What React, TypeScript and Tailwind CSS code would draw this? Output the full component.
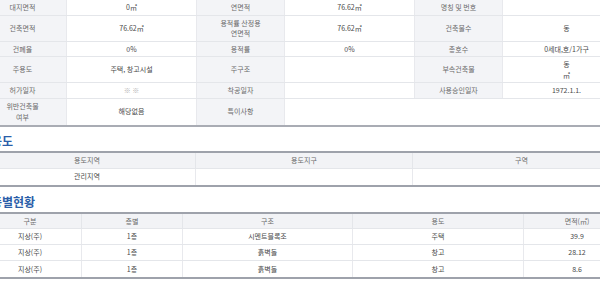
import React from "react";

const topRows: { cells: (string | string[])[]; tall?: boolean }[] = [
  { cells: ["대지면적", "0㎡", "연면적", "76.62㎡", "명칭 및 번호", ""] },
  { cells: ["건축면적", "76.62㎡", ["용적률 산정용", "연면적"], "76.62㎡", "건축물수", "동"], tall: true },
  { cells: ["건폐율", "0%", "용적률", "0%", "총호수", "0세대,호/1가구"] },
  { cells: ["주용도", "주택, 창고시설", "주구조", "", "부속건축물", ["동", "㎡"]], tall: true },
  { cells: ["허가일자", "※ ※", "착공일자", "", "사용승인일자", "1972.1.1."] },
];

const floors = [
  ["지상(주)", "1층", "시멘트블록조", "주택", "39.9"],
  ["지상(주)", "1층", "흙벽돌", "창고", "28.12"],
  ["지상(주)", "1층", "흙벽돌", "창고", "8.6"],
];

const Lines = ({ v }: { v: string | string[] }) =>
  Array.isArray(v) ? (
    <span>
      {v.map((l, i) => (
        <span key={i} className="block">
          {l}
        </span>
      ))}
    </span>
  ) : (
    <span>{v}</span>
  );

const App = () => {
  return (
    <div className="w-[600px] h-[285px] overflow-hidden bg-white">
      <div className="w-[651px] -ml-[21px] font-['Noto_Sans_CJK_KR',sans-serif] text-[7px] leading-[10.5px] text-[#4a4a4a]">
        {/* Building summary */}
        <div className="border-b-2 border-[#a9acb4]">
          {topRows.map((row, r) => (
            <div
              key={r}
              className={`grid grid-cols-[88px_130px_88px_130px_88px_1fr] border-b border-[#e4e6ea] ${row.tall ? "h-[26px]" : "h-[15.5px]"}`}
            >
              {row.cells.map((c, i) => (
                <div
                  key={i}
                  className={`flex items-center justify-center text-center border-r border-[#e8e9ed] last:border-r-0 ${i % 2 === 0 ? "bg-[#f3f4f7] text-[#6b6b6b]" : "bg-white"} ${c === "※ ※" ? "text-[#b0b0b0]" : ""}`}
                >
                  <Lines v={c} />
                </div>
              ))}
            </div>
          ))}
          <div className="grid grid-cols-[88px_130px_88px_1fr] h-[26px]">
            <div className="flex items-center justify-center text-center bg-[#f3f4f7] text-[#6b6b6b] border-r border-[#e8e9ed]">
              <Lines v={["위반건축물", "여부"]} />
            </div>
            <div className="flex items-center justify-center border-r border-[#e8e9ed]">해당없음</div>
            <div className="flex items-center justify-center bg-[#f3f4f7] text-[#6b6b6b] border-r border-[#e8e9ed]">특이사항</div>
            <div />
          </div>
        </div>

        {/* Zoning */}
        <h3 className="pl-[12px] pt-[7px] pb-[3px] text-[12px] leading-[14px] font-bold text-[#2b5ea9]">용도</h3>
        <div className="border-y-2 border-[#9ea2ab]">
          <div className="grid grid-cols-3 h-[16px] bg-[#f2f3f6] text-[#6b6b6b] border-b border-[#e4e6ea]">
            <div className="flex items-center justify-center border-r border-[#e4e6ea]">용도지역</div>
            <div className="flex items-center justify-center border-r border-[#e4e6ea]">용도지구</div>
            <div className="flex items-center justify-center">구역</div>
          </div>
          <div className="grid grid-cols-3 h-[16px]">
            <div className="flex items-center justify-center border-r border-[#e8e9ed]">관리지역</div>
            <div className="border-r border-[#e8e9ed]" />
            <div />
          </div>
        </div>

        {/* Floors */}
        <h3 className="pl-[12px] pt-[8px] pb-[3px] text-[12px] leading-[14px] font-bold text-[#2b5ea9]">층별현황</h3>
        <div className="border-y-2 border-[#9ea2ab]">
          <div className="grid grid-cols-[103px_101px_170px_171px_1fr] h-[15.5px] bg-[#f2f3f6] text-[#6b6b6b] border-b border-[#e4e6ea]">
            {["구분", "층별", "구조", "용도", "면적(㎡)"].map((h, i) => (
              <div key={i} className="flex items-center justify-center border-r border-[#e4e6ea] last:border-r-0">
                {h}
              </div>
            ))}
          </div>
          {floors.map((f, r) => (
            <div
              key={r}
              className="grid grid-cols-[103px_101px_170px_171px_1fr] h-[16px] border-b border-[#e4e6ea] last:border-b-0"
            >
              {f.map((c, i) => (
                <div key={i} className="flex items-center justify-center border-r border-[#e8e9ed] last:border-r-0">
                  {c}
                </div>
              ))}
            </div>
          ))}
        </div>
      </div>
    </div>
  );
};

export default App;
